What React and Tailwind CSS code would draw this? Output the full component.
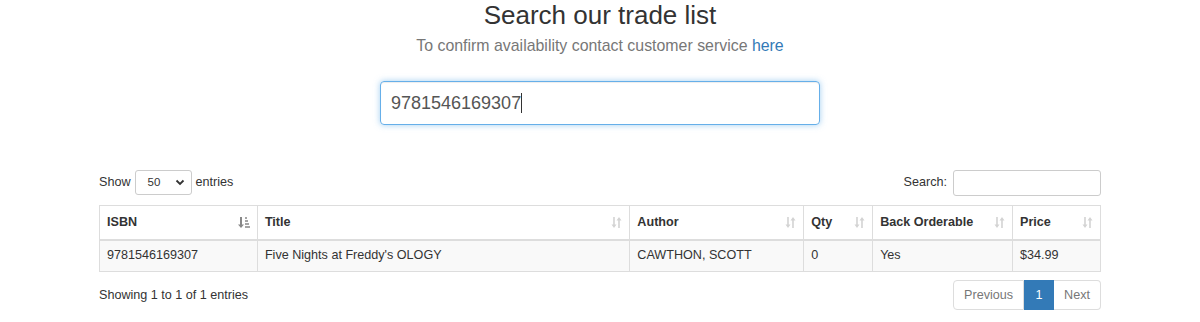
import React from "react";

const cols = [
	{ name: "ISBN", w: "w-[158px]", active: true },
	{ name: "Title", w: "w-[373px]" },
	{ name: "Author", w: "w-[174px]" },
	{ name: "Qty", w: "w-[69px]" },
	{ name: "Back Orderable", w: "w-[140px]" },
	{ name: "Price", w: "w-[88px]" },
];

const row = ["9781546169307", "Five Nights at Freddy's OLOGY", "CAWTHON, SCOTT", "0", "Yes", "$34.99"];

function SortIcon({ active }) {
	if (active) {
		return (
			<svg width="12" height="13" viewBox="0 0 12 13" className="text-[#888]">
				<path d="M3 1v9" stroke="currentColor" strokeWidth="2" />
				<path d="M0 8.5l3 3.5 3-3.5z" fill="currentColor" />
				<path d="M7 2h2M7 5h3M7 8h4M7 11h5" stroke="currentColor" strokeWidth="1.4" />
			</svg>
		);
	}
	return (
		<svg width="11" height="13" viewBox="0 0 11 13" className="text-[#d3d3d3]">
			<path d="M3 1v9" stroke="currentColor" strokeWidth="1.6" />
			<path d="M0.5 8.5l2.5 3.5 2.5-3.5z" fill="currentColor" />
			<path d="M8 3v9" stroke="currentColor" strokeWidth="1.6" />
			<path d="M5.5 4.5L8 1l2.5 3.5z" fill="currentColor" />
		</svg>
	);
}

export default function App() {
	return (
		<main className="w-full min-h-[322px] bg-white text-[#333] font-['Liberation_Sans',Arial,sans-serif] flex flex-col items-center">
			<h1 className="mt-[1px] text-[26px] leading-[29px] text-[#333]">Search our trade list</h1>
			<p className="mt-[5px] text-[15.9px] leading-[22px] text-[#777]">
				To confirm availability contact customer service <a className="text-[#337ab7]">here</a>
			</p>
			<div className="mt-[24px] w-[440px] h-[44px] rounded-[4px] border border-[#66afe9] shadow-[0_0_6px_rgba(102,175,233,0.6),inset_0_1px_1px_rgba(0,0,0,0.075)] flex items-center px-[10px]">
				<span className="text-[18px] text-[#555]">9781546169307</span>
				<span className="w-px h-[20px] bg-[#333]"></span>
			</div>

			<section className="mt-[45px] w-[1002px] text-[12.6px]">
				<div className="flex items-center justify-between h-[25px]">
					<div className="flex items-center gap-[4px]">
						<span>Show</span>
						<div className="w-[57px] h-[25px] border border-[#ccc] rounded-[3px] flex items-center justify-between pl-[12px] pr-[6px] text-[11.5px]">
							<span>50</span>
							<svg width="10" height="7" viewBox="0 0 10 7">
								<path d="M1.5 1.5l3.5 3.5 3.5-3.5" fill="none" stroke="#333" strokeWidth="1.8" />
							</svg>
						</div>
						<span>entries</span>
					</div>
					<div className="flex items-center gap-[6px]">
						<span>Search:</span>
						<div className="w-[148px] h-[26px] border border-[#ccc] rounded-[3px]"></div>
					</div>
				</div>

				<table className="mt-[10px] w-full border-collapse border border-[#ddd]">
					<thead>
						<tr className="h-[34px]">
							{cols.map(c => (
								<th key={c.name} className={`${c.w} border border-[#ddd] border-b-2 px-[7px] text-left font-bold`}>
									<div className="flex items-center justify-between">
										<span>{c.name}</span>
										<SortIcon active={c.active} />
									</div>
								</th>
							))}
						</tr>
					</thead>
					<tbody>
						<tr className="h-[32px] bg-[#f9f9f9]">
							{row.map((v, i) => (
								<td key={i} className="border border-[#ddd] px-[7px]">{v}</td>
							))}
						</tr>
					</tbody>
				</table>

				<div className="mt-[8px] flex items-center justify-between">
					<span>Showing 1 to 1 of 1 entries</span>
					<div className="flex h-[30px] text-[#777]">
						<span className="px-[10px] flex items-center border border-[#ddd] rounded-l-[4px]">Previous</span>
						<span className="w-[30px] flex items-center justify-center bg-[#337ab7] border border-[#337ab7] text-white">1</span>
						<span className="px-[10px] flex items-center border border-[#ddd] border-l-0 rounded-r-[4px]">Next</span>
					</div>
				</div>
			</section>
		</main>
	);
}
